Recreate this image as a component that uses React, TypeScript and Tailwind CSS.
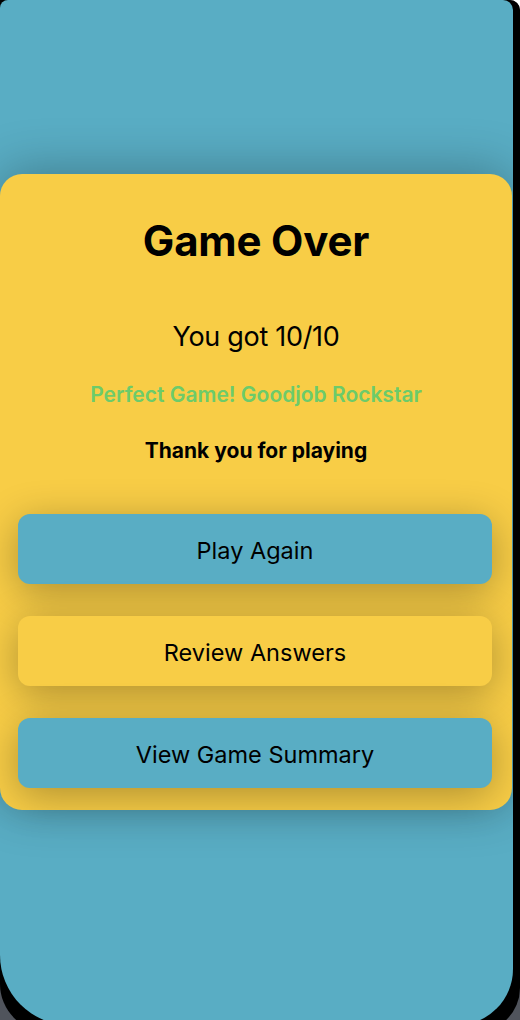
import React from "react";

export default function App() {
  const font = { fontFamily: "Inter, 'Noto Sans', sans-serif" };
  return (
    <div className="w-[520px] h-[1020px] overflow-hidden bg-white" style={font}>
      <div className="w-[520px] h-[1030px] bg-[#50545c] rounded-tr-[10px]">
        <div className="w-[520px] h-[1032px] bg-black rounded-tr-[10px] rounded-bl-[48px] rounded-br-[44px]">
          <div className="relative w-[513px] h-[1025px] bg-[#59adc4] rounded-tl-[8px] rounded-tr-[10px] rounded-bl-[70px] rounded-br-[56px] overflow-hidden pt-[174px]">
            <div className="w-[512px] h-[636px] bg-[#f8cd46] rounded-[22px] shadow-[0_-4px_50px_rgba(0,0,0,0.28)] flex flex-col items-center pt-[42px]">
              <h1 className="text-[42px] leading-[50px] font-bold text-black tracking-[-0.2px]">Game Over</h1>
              <p className="mt-[55px] text-[27px] leading-[32px] text-black tracking-[-0.3px]">You got 10/10</p>
              <p className="mt-[28px] text-[21px] leading-[28px] font-semibold text-[#6ccb6a]">Perfect Game! Goodjob Rockstar</p>
              <p className="mt-[28px] text-[21px] leading-[28px] font-bold text-black">Thank you for playing</p>
              <div className="mt-[49px] w-full pl-[18px] pr-[20px] flex flex-col gap-[32px]">
                <button className="h-[70px] w-full rounded-[12px] bg-[#59adc4] pt-[3px] text-[23.5px] text-black shadow-[0_8px_40px_rgba(0,0,0,0.3)]">Play Again</button>
                <button className="h-[70px] w-full rounded-[12px] bg-[#f8cd46] pt-[3px] text-[23.5px] text-black shadow-[0_8px_40px_rgba(0,0,0,0.3)]">Review Answers</button>
                <button className="h-[70px] w-full rounded-[12px] bg-[#59adc4] pt-[3px] text-[23.5px] text-black shadow-[0_8px_40px_rgba(0,0,0,0.3)]">View Game Summary</button>
              </div>
            </div>
          </div>
        </div>
      </div>
    </div>
  );
}
